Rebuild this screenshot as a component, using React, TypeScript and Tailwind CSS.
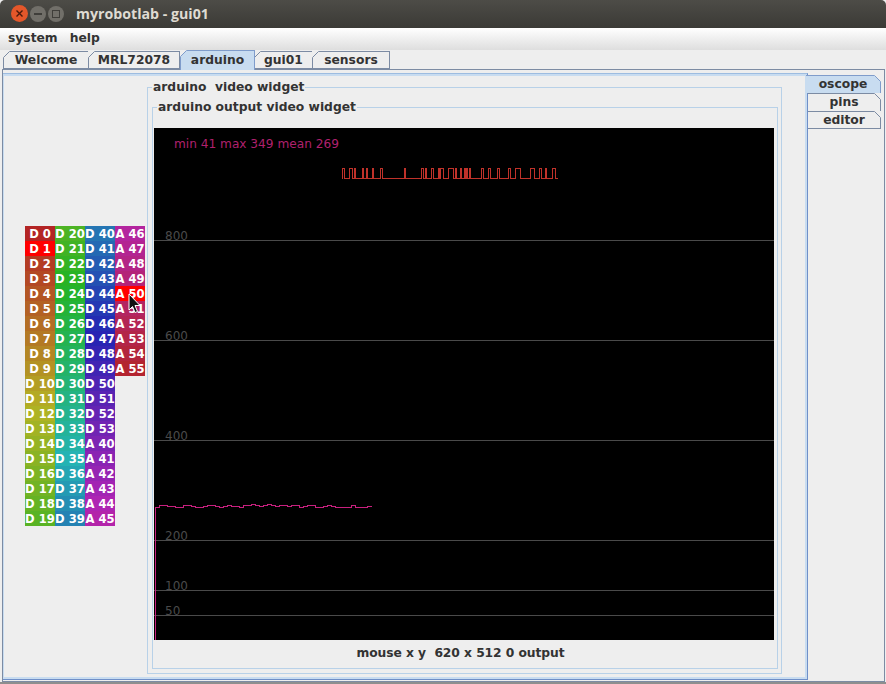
import React from "react";

const menuFont = "font-['DejaVu_Sans',sans-serif] font-bold text-[12.3px] text-[#333333]";

const hTabs = [
  { label: "Welcome", w: "w-[86px]", active: false },
  { label: "MRL72078", w: "w-[91px]", active: false },
  { label: "arduino", w: "w-[75px]", active: true },
  { label: "gui01", w: "w-[58px]", active: false },
  { label: "sensors", w: "w-[77px]", active: false },
];

const vTabs = [
  { label: "oscope", h: "h-[18px]", active: true },
  { label: "pins", h: "h-[18px]", active: false },
  { label: "editor", h: "h-[17px]", active: false },
];

function hsv(h: number, s: number, v: number) {
  const f = (n: number) => {
    const k = (n + h / 60) % 6;
    return Math.round(255 * (v - v * s * Math.max(0, Math.min(k, 4 - k, 1))));
  };
  return `rgb(${f(5)},${f(3)},${f(1)})`;
}

const pins: string[] = [];
for (let i = 0; i <= 53; i++) pins.push(`D ${i}`);
for (let i = 40; i <= 55; i++) pins.push(`A ${i}`);
const columns = [pins.slice(0, 20), pins.slice(20, 40), pins.slice(40, 60), pins.slice(60, 70)];
const pressed = new Set(["D 1", "A 50"]);

const highs: [number, number][] = [
  [342, 344], [349, 352], [354, 355], [362, 363], [366, 367], [372, 373], [380, 382],
  [404, 405], [421, 423], [425, 426], [431, 433], [438, 439], [440, 443], [448, 453],
  [455, 456], [460, 461], [464, 465], [466, 467], [469, 470], [481, 483], [488, 490],
  [497, 499], [508, 510], [515, 520], [530, 534], [539, 541], [545, 546], [552, 555],
];
let digital = "M342 178";
for (const [a, b] of highs) {
  digital += ` L${a} 178 L${a} 168 L${b} 168 L${b} 178`;
}
digital += " L557 178";

const noise = [
  507, 505, 505, 506, 506, 507, 507, 505, 505, 506, 507, 507, 506, 505, 505, 506, 507, 506,
  505, 506, 506, 507, 505, 505, 504, 505, 506, 505, 504, 505, 506, 505, 505, 506, 505, 505, 507,
  506, 505, 505, 507, 507, 506, 505, 506, 507, 507, 507, 507, 505, 507, 507, 507, 506,
];
let analog = "M155 640 L155 507";
noise.forEach((y, i) => {
  analog += ` V${y} H${155 + (i + 1) * 4}`;
});

const gridLines = [
  { y: 240, t: "800" },
  { y: 340, t: "600" },
  { y: 440, t: "400" },
  { y: 540, t: "200" },
  { y: 590, t: "100" },
  { y: 615, t: "50" },
];

function Corner({ color, side }: { color: string; side: "left" | "right" }) {
  return (
    <svg
      width="7"
      height="7"
      viewBox="0 0 7 7"
      className={side === "left" ? "absolute -left-px -top-px" : "absolute -right-px -top-px"}
    >
      {side === "left" ? (
        <>
          <path d="M0 0 H7 L0 7 Z" fill="#eeeeee" />
          <path d="M0.5 6.5 L6.5 0.5" stroke={color} strokeWidth="1" />
        </>
      ) : (
        <>
          <path d="M0 0 H7 V7 Z" fill="#eeeeee" />
          <path d="M0.5 0.5 L6.5 6.5" stroke={color} strokeWidth="1" />
        </>
      )}
    </svg>
  );
}

function Chart() {
  return (
    <div className="relative h-[512px] w-[620px] bg-black font-['DejaVu_Sans',sans-serif] text-[12px]">
      <svg width="620" height="512" viewBox="154 128 620 512" className="absolute inset-0">
        {gridLines.map((g) => (
          <line key={g.y} x1="154" x2="774" y1={g.y + 0.5} y2={g.y + 0.5} stroke="#4a4a4a" strokeWidth="1" />
        ))}
        <path d={digital} fill="none" stroke="#c0322a" strokeWidth="1" shapeRendering="crispEdges" transform="translate(0.5 0.5)" />
        <path d={analog} fill="none" stroke="#c8207e" strokeWidth="1" shapeRendering="crispEdges" transform="translate(0.5 0.5)" />
      </svg>
      <span className="absolute left-[20px] top-[9px] text-[12.15px] leading-[14px] text-[#b0206e]">min 41 max 349 mean 269</span>
      {gridLines.map((g) => (
        <span key={g.y} style={{ top: g.y - 128 - 11 }} className="absolute left-[11px] leading-[14px] text-[#4a4a4a]">
          {g.t}
        </span>
      ))}
    </div>
  );
}

function PinGrid() {
  return (
    <div className="relative flex shrink-0 items-start font-['DejaVu_Sans',sans-serif] text-[11.6px] font-bold text-white">
      {columns.map((col, c) => (
        <div key={c} className="flex w-[30px] flex-col">
          {col.map((p) => (
            <div
              key={p}
              style={{ background: pressed.has(p) ? "#ff0000" : hsv((pins.indexOf(p) / 70) * 360, 0.8, 0.7) }}
              className="flex h-[15px] w-[30px] items-center justify-center overflow-hidden whitespace-nowrap pt-[1px] leading-[14px]"
            >
              {p}
            </div>
          ))}
        </div>
      ))}
      <svg width="14" height="22" viewBox="0 0 14 22" className="absolute left-[103px] top-[67px]">
        <path d="M1 1 V17 L4.5 13.5 L7 19.5 L9.5 18.5 L7 12.5 H12 Z" fill="#111111" stroke="#ffffff" strokeWidth="1" />
      </svg>
    </div>
  );
}

export default function App() {
  return (
    <div className="flex h-[684px] w-[886px] flex-col overflow-hidden bg-[#eeeeee]">
      {/* title bar */}
      <div className="flex h-[28px] shrink-0 items-center rounded-t-[5px] bg-gradient-to-b from-[#4d4c47] to-[#3b3a36] pb-[1px] pl-[11px]">
        <div className="flex w-[65px] items-center gap-[2px]">
          <div className="flex h-[17px] w-[17px] items-center justify-center rounded-full bg-[#e4572a]">
            <svg width="7" height="7" viewBox="0 0 7 7">
              <path d="M0.5 0.5 L6.5 6.5 M6.5 0.5 L0.5 6.5" stroke="#4a1a0c" strokeWidth="1.4" />
            </svg>
          </div>
          <div className="flex h-[16px] w-[16px] items-center justify-center rounded-full bg-[#716f69]">
            <div className="h-[2px] w-[8px] bg-[#3f3e3a]" />
          </div>
          <div className="flex h-[16px] w-[16px] items-center justify-center rounded-full bg-[#716f69]">
            <div className="h-[8px] w-[8px] border border-[#3f3e3a]" />
          </div>
        </div>
        <span className="font-['Open_Sans',sans-serif] text-[14.2px] font-bold text-[#dfdbd2]">myrobotlab - gui01</span>
      </div>

      {/* menu bar */}
      <div className={`flex h-[22px] shrink-0 items-center gap-[12px] bg-gradient-to-b from-[#ffffff] to-[#dedede] pb-[2px] pl-[8px] ${menuFont}`}>
        <span>system</span>
        <span>help</span>
      </div>

      {/* tab strip */}
      <div className={`flex h-[19px] shrink-0 items-end pl-[3px] ${menuFont}`}>
        {hTabs.map((t) => (
          <div
            key={t.label}
            className={
              t.active
                ? `relative z-10 -mb-[1px] flex h-[20px] items-center justify-center border border-b-0 border-[#7f9ccb] bg-[#c8dcf0] ${t.w}`
                : `relative flex h-[18px] items-center justify-center border border-l-0 border-[#7c8ba3] first:border-l ${t.w}`
            }
          >
            <Corner side="left" color={t.active ? "#7f9ccb" : "#7c8ba3"} />
            {t.label}
          </div>
        ))}
      </div>

      {/* main tab pane */}
      <div className="flex min-h-0 flex-1 flex-col pl-[2px] pr-[1px]">
        <div className="flex min-h-0 flex-1 border border-[#7c8ba3] bg-[#eeeeee] pt-[3px]">
          {/* nested pane */}
          <div className="mb-[1px] flex min-w-0 flex-1 border-t border-r border-b border-t-[#9dbce0] border-r-[#6f8fc8] border-b-[#6f8fc8] bg-[#c8dcf0] pl-[1px] pr-[2px] pt-[2px] pb-[2px]">
            <div className="flex min-w-0 flex-1 items-stretch bg-[#eeeeee] pl-[21px]">
              <div className="flex items-center pb-[1px]">
                <PinGrid />
              </div>
              <fieldset className="ml-[2px] mt-[4px] mb-[3px] w-[635px] border border-[#b8d1e8] pl-[4px] pt-[5px]">
                <legend className={`ml-0 whitespace-pre px-[1px] leading-[15px] ${menuFont}`}>arduino  video widget</legend>
                <fieldset className="w-[626px] border border-[#b8d1e8] pl-[1px]">
                  <legend className={`ml-[3px] px-[1px] leading-[15px] ${menuFont}`}>arduino output video widget</legend>
                  <div className="mt-[13px]">
                    <Chart />
                  </div>
                  <div className={`flex h-[28px] w-[620px] items-center justify-center pb-[2px] pr-[7px] ${menuFont}`}>
                    <span className="whitespace-pre tracking-[-0.07px]">mouse x y  620 x 512 0 output</span>
                  </div>
                </fieldset>
              </fieldset>
            </div>
          </div>

          {/* vertical tabs */}
          <div className={`flex w-[76px] shrink-0 flex-col pt-[2px] ${menuFont}`}>
            {vTabs.map((t) => (
              <div
                key={t.label}
                className={
                  t.active
                    ? `relative -ml-[2px] flex w-[75px] items-center justify-center border-t border-r border-[#7f9ccb] bg-[#c8dcf0] ${t.h}`
                    : `relative flex w-[73px] items-center justify-center border-t border-r border-[#7c8ba3] ${t.h}`
                }
              >
                <Corner side="right" color={t.active ? "#7f9ccb" : "#7c8ba3"} />
                {t.label}
              </div>
            ))}
            <div className="h-px w-[73px] bg-[#7c8ba3]" />
          </div>
        </div>
      </div>
      <div className="h-[2px] shrink-0 bg-[#8e8e8e]" />
    </div>
  );
}
